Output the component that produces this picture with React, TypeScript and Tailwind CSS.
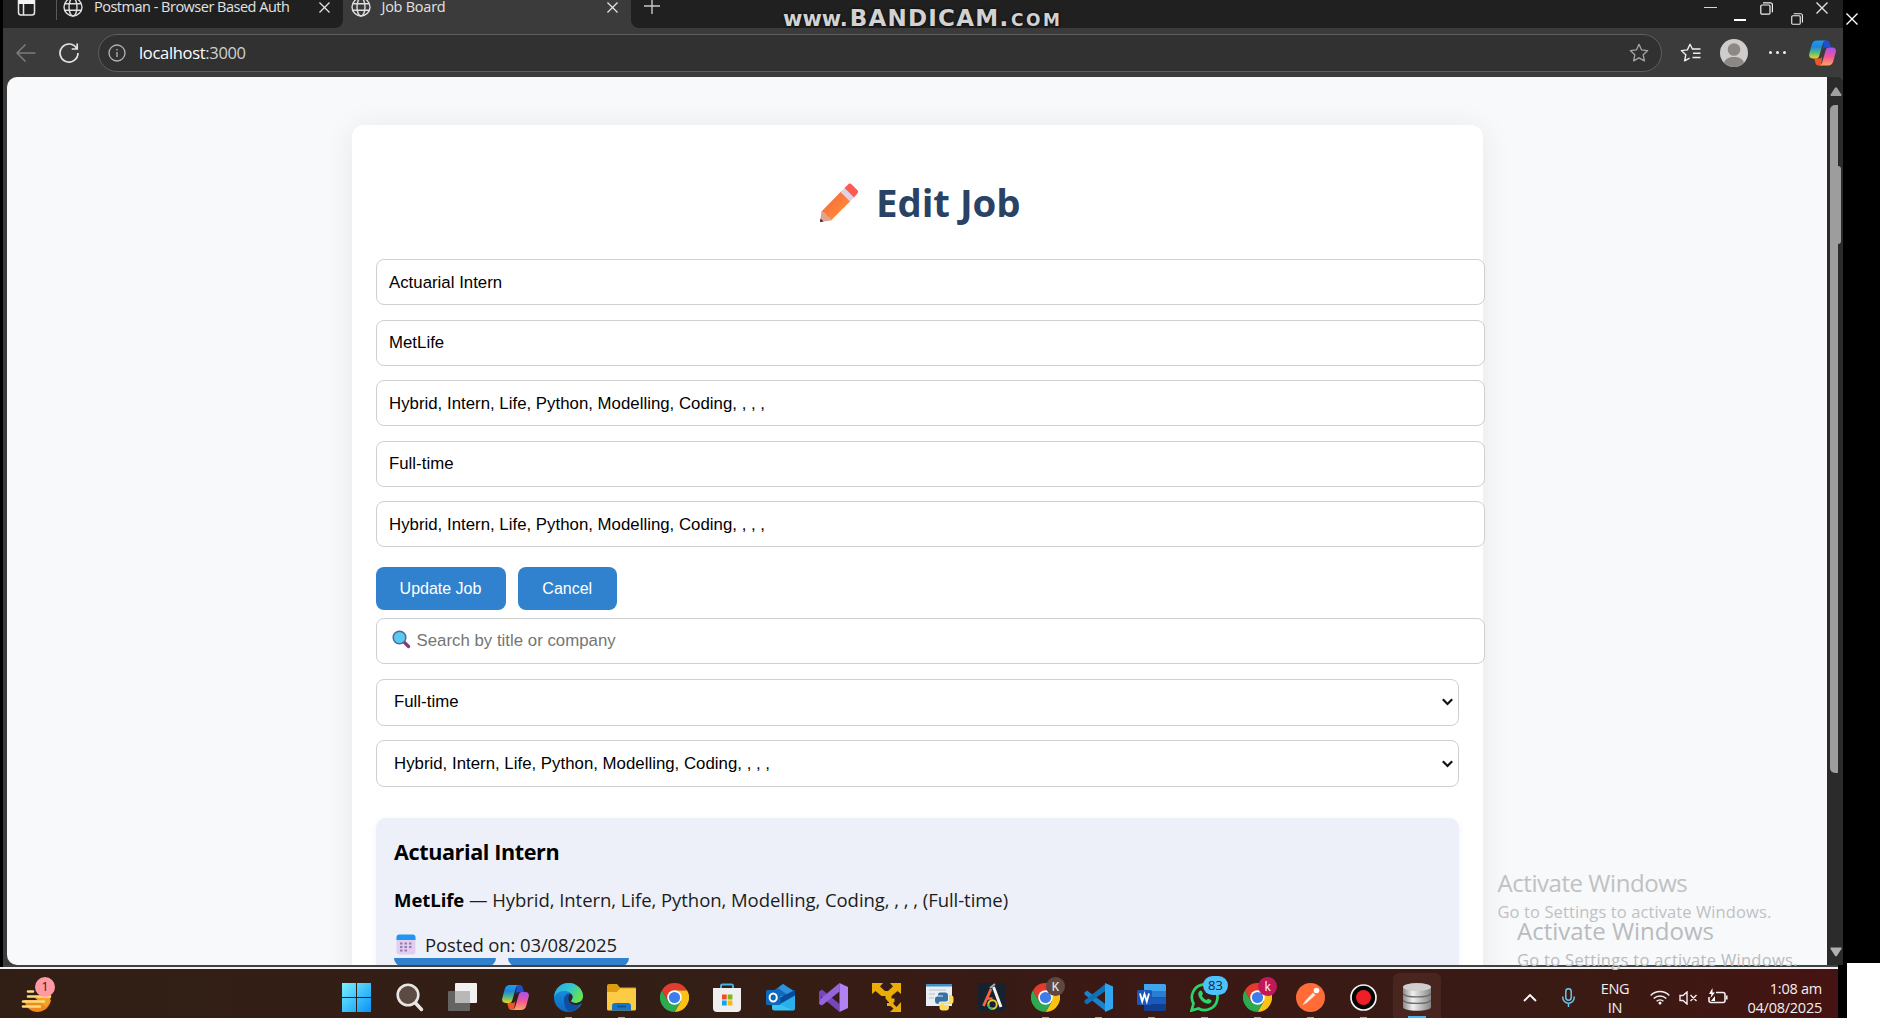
import type { ReactNode } from 'react';

const FIELDS = [
  'Actuarial Intern',
  'MetLife',
  'Hybrid, Intern, Life, Python, Modelling, Coding, , , ,',
  'Full-time',
  'Hybrid, Intern, Life, Python, Modelling, Coding, , , ,',
];
const FILTERS = ['Full-time', 'Hybrid, Intern, Life, Python, Modelling, Coding, , , ,'];

function Globe() {
  return (
    <svg width="20" height="20" viewBox="0 0 20 20" fill="none" stroke="#dedede" strokeWidth="1.4">
      <circle cx="10" cy="10" r="9" />
      <ellipse cx="10" cy="10" rx="4" ry="9" />
      <path d="M2 6.8h16M2 13.2h16" />
    </svg>
  );
}

function Cross({ size = 11, color = '#e2e2e2' }: { size?: number; color?: string }) {
  return (
    <svg width={size} height={size} viewBox="0 0 12 12" stroke={color} strokeWidth="1.4">
      <path d="M.5.5l11 11M11.5.5l-11 11" />
    </svg>
  );
}

function Restore({ size }: { size: number }) {
  return (
    <svg width={size} height={size} viewBox="0 0 13 13" fill="none" stroke="#f0f0f0" strokeWidth="1.2">
      <rect x=".8" y="3" width="9.2" height="9.2" rx="1.2" />
      <path d="M3 .8h7.4a2 2 0 0 1 2 2v7.4" />
    </svg>
  );
}

function Copilot({ id, w, h }: { id: string; w: number; h: number }) {
  return (
    <svg width={w} height={h} viewBox="0 0 27 25">
      <defs>
        <linearGradient id={id + 'a'} x1="0" y1="0" x2="0" y2="1">
          <stop offset="0" stopColor="#1b9cf0" />
          <stop offset=".35" stopColor="#1f86dc" />
          <stop offset=".65" stopColor="#52b788" />
          <stop offset="1" stopColor="#f2d21a" />
        </linearGradient>
        <linearGradient id={id + 'b'} x1="0" y1="0" x2="0" y2="1">
          <stop offset="0" stopColor="#a552ee" />
          <stop offset=".5" stopColor="#f0559b" />
          <stop offset="1" stopColor="#ffa45e" />
        </linearGradient>
      </defs>
      <path d="M15 0h2.600c1.800 0 2.700 1.200 3.200 2.800L22 7h-5c-2 0-2.800 1-3.300 2.600z" fill="#1c50d0" />
      <path d="M12 25H9.500c-1.900 0-2.700-1.200-3.100-2.800L5.200 18H10c2 0 2.800-1 3.300-2.600z" fill="#f0562e" />
      <path d="M8 0h9c-2 0-2.700 1.500-3.200 3.200l-3.600 12.300c-.5 1.700-1.400 2.500-3.200 2.500H3.500C.7 18-.3 15.800.2 13.500L2.800 4C3.600 1.200 5.300 0 8 0z" fill={`url(#${id}a)`} />
      <path d="M19 25h-9c2 0 2.700-1.500 3.200-3.200l3.600-12.300C17.300 7.800 18.200 7 20 7h3.500c2.800 0 3.800 2.200 3.300 4.500L24.200 21c-.8 2.800-2.500 4-5.200 4z" fill={`url(#${id}b)`} />
    </svg>
  );
}

function TitleBar() {
  return (
    <div className="flex h-7 w-[1840px] bg-[#3b3b3b]">
      <div className="flex w-[340px] rounded-br-lg bg-[#202020]">
        <div className="flex w-[53px] justify-end pr-[20px]">
          <svg width="19" height="16" viewBox="0 0 19 16" fill="none" stroke="#e6e6e6" strokeWidth="1.5">
            <path d="M1.500 0v12.500a2.500 2.500 0 0 0 2.500 2.500h11a2.500 2.500 0 0 0 2.500-2.500V0M6.500 4v11" />
            <path d="M1.500 0h16v4h-16z" fill="#f5f5f5" stroke="none" />
          </svg>
        </div>
        <div className="h-5 w-px bg-[#5a5a5a]" />
        <div className="-mt-[3px] ml-[6px]"><Globe /></div>
        <div className="ml-[11px] w-[200px] whitespace-nowrap text-[14.500px] leading-[13px] tracking-[-0.500px] text-[#e2e2e2]">Postman - Browser Based Auth</div>
        <div className="ml-[25px] mt-[2px]"><Cross /></div>
      </div>
      <div className="flex w-[288px] bg-[#3b3b3b]">
        <div className="-mt-[3px] ml-[8px]"><Globe /></div>
        <div className="ml-[10.500px] w-[218px] whitespace-nowrap text-[14.500px] leading-[13px] tracking-[-0.250px] text-[#e2e2e2]">Job Board</div>
        <div className="ml-[7px] mt-[2px]"><Cross /></div>
      </div>
      <div className="flex flex-1 rounded-bl-lg bg-[#202020]">
        <svg className="ml-[13px] -mt-[2px]" width="16" height="16" viewBox="0 0 16 16" stroke="#c8c8c8" strokeWidth="1.400"><path d="M8 0v16M0 8h16" /></svg>
        <div className="ml-auto flex pr-[15px]">
          <div className="mt-[6.500px] h-[1.500px] w-[13px] bg-[#d5d5d5]" />
          <div className="ml-[17px] mt-[19px] h-[1.500px] w-[12px] bg-white" />
          <div className="ml-[14px] mt-[2px]"><Restore size={13} /></div>
          <div className="ml-[18px] mt-[13px]"><Restore size={12} /></div>
          <div className="ml-[13px] mt-[2px]"><Cross size={12} /></div>
        </div>
      </div>
    </div>
  );
}

function Toolbar() {
  const star = 'M10 1.300l2.600 5.600 6.100.7-4.500 4.200 1.200 6.100L10 14.900l-5.400 3 1.200-6.100L1.300 7.600l6.100-.7z';
  return (
    <div className="flex h-[49px] w-[1840px] items-center bg-[#3b3b3b]">
      <svg className="ml-[13px]" width="20" height="18" viewBox="0 0 20 18" fill="none" stroke="#7c7c7c" strokeWidth="1.500"><path d="M19.500 9H1M9.500.5L1 9l8.500 8.500" /></svg>
      <svg className="ml-[23px]" width="20" height="20" viewBox="0 0 20 20" fill="none" stroke="#e4e4e4" strokeWidth="1.700"><path d="M17.800 5.500A9 9 0 1 0 19 10M18.200.5v5.500h-5.500" /></svg>
      <div className="ml-[19px] flex h-[38px] w-[1563.500px] items-center rounded-full border border-[#5e5e5e] bg-[#313131]">
        <svg className="ml-[9px]" width="18" height="18" viewBox="0 0 18 18" fill="none" stroke="#b4b4b4" strokeWidth="1.300"><circle cx="9" cy="9" r="8" /><path d="M9 8v5M9 5v1.400" /></svg>
        <span className="ml-[13px] text-[16.500px] leading-5 tracking-[-0.320px] text-white">localhost<span className="text-[#d0d0d0]">:3000</span></span>
        <svg className="ml-auto mr-[12px]" width="20" height="20" viewBox="0 0 20 20" fill="none" stroke="#a5a5a5" strokeWidth="1.300" strokeLinejoin="round"><path d={star} /></svg>
      </div>
      <svg className="ml-[18px]" width="21" height="20" viewBox="0 0 21 20" fill="none" stroke="#efefef" strokeWidth="1.400" strokeLinejoin="round"><path d="M12.800 6.800L10 1.300 7.400 6.900l-6.100.7 4.500 4.200-1.200 6.100 5-2.800M12.500 6h8M13 10.300h7.500M12.500 14.500h8" /></svg>
      <svg className="ml-[19px]" width="28" height="28" viewBox="0 0 28 28"><circle cx="14" cy="14" r="14" fill="#cfcdcb" /><circle cx="14" cy="10.500" r="6.300" fill="#8b8886" /><path d="M4 23.800c1-4 5-5.800 10-5.800s9 1.800 10 5.800A14 14 0 0 1 4 23.800z" fill="#8b8886" /></svg>
      <div className="ml-[21px] flex gap-[3.500px]">{[0, 1, 2].map((d) => <i key={d} className="size-[3.500px] rounded-full bg-[#efefef]" />)}</div>
      <div className="ml-[23px]"><Copilot id="top" w={27} h={26} /></div>
    </div>
  );
}

function Pencil() {
  return (
    <svg width="40" height="40" viewBox="0 0 40 40">
      <defs><linearGradient id="pen" x1="0" y1="0" x2="1" y2="1"><stop offset="0" stopColor="#e86a3a" /><stop offset=".55" stopColor="#ff7e3a" /><stop offset="1" stopColor="#ffa23c" /></linearGradient></defs>
      <path d="M2.500 28.500L22.500 8l9.500 9.500L12 37.500z" fill="url(#pen)" />
      <path d="M2.500 28.500L1 39l11-1.500c0-2.500-1.500-4-4-4.500-.5-2.500-2.500-4-5.500-4.500z" fill="#e0a590" />
      <path d="M1.500 35.500L1 39l3.500-.5z" fill="#3c1f35" />
      <path d="M21.500 9l4-4L35 14.500l-4 4z" fill="#dcd3ea" />
      <path d="M25.500 5l3.500-3.500c1.500-1.500 2.500-1.200 4 .2l5 5c1.400 1.400 1.500 2.700.2 4L35 14.500z" fill="#ff5a50" />
    </svg>
  );
}

function PageContent() {
  const box = 'shrink-0 flex items-center rounded-lg border border-[#cfcfcf] bg-white text-[16.800px] tracking-[0.020px]';
  return (
    <div className="flex h-[888px] w-[1820px] justify-center overflow-hidden rounded-l-[10px] bg-[#f7f9fb]">
      <div className="mt-12 flex h-[1100px] w-[1131px] flex-col rounded-xl bg-white px-6 shadow-[0_3px_32px_rgba(0,0,0,0.075)]">
        <h1 className="mt-[49px] mb-[27px] flex h-[58px] shrink-0 items-center justify-center gap-[16.500px] pl-[6px] text-[38.400px] font-bold text-[#2a4365]">
          <Pencil /><span className="tracking-[-0.050px]">Edit Job</span>
        </h1>
        <div className="flex flex-col gap-[14.500px] font-['Liberation_Sans',sans-serif] text-black">
          {FIELDS.map((f, i) => <div key={i} className={`${box} h-[46px] w-[1109px] pl-[12.500px] pt-px`}>{f}</div>)}
        </div>
        <div className="mt-[19.500px] flex h-[43.500px] shrink-0 gap-[12.500px] font-['Liberation_Sans',sans-serif] text-[16px] text-white">
          <button className="w-[130px] rounded-lg bg-[#3182ce] pt-px">Update Job</button>
          <button className="w-[98.500px] rounded-lg bg-[#3182ce] pt-px">Cancel</button>
        </div>
        <div className="mt-2 flex flex-col gap-[14.500px] font-['Liberation_Sans',sans-serif] text-black">
          <div className={`${box} h-[46px] w-[1109px] pb-[1px] pl-[15px] text-[#757575]`}>
            <svg className="-mt-[2px] mr-[6px]" width="19" height="19" viewBox="0 0 19 19"><path d="M11 11l5.500 5.500" stroke="#7b3f7c" strokeWidth="3.200" strokeLinecap="round" /><circle cx="7.500" cy="7.500" r="6.300" fill="#5cc9ee" stroke="#476a9c" strokeWidth="1.500" /></svg>
            Search by title or company
          </div>
          {FILTERS.map((f, i) => (
            <div key={i} className={`${box} h-[47px] w-[1083px] justify-between pl-[17.500px] pr-[5px]`}>
              {f}
              <svg width="11" height="8" viewBox="0 0 11 8" fill="none" stroke="#111" strokeWidth="2.200"><path d="M.8 1.200L5.500 6l4.700-4.800" /></svg>
            </div>
          ))}
        </div>
        <div className="mt-[30.500px] flex h-[240px] shrink-0 flex-col rounded-[10px] bg-[#edf0f8] pl-[18.500px] text-black shadow-[0_2px_8px_rgba(0,0,0,0.05)]">
          <h3 className="mt-[19px] text-[21.600px] font-bold leading-[30px] tracking-[-0.400px]">Actuarial Intern</h3>
          <p className="mt-[18px] whitespace-nowrap text-[18.500px] leading-[30px] tracking-[-0.050px] text-[#1c1c1c]"><b className="text-black">MetLife</b> — Hybrid, Intern, Life, Python, Modelling, Coding, , , , (Full-time)</p>
          <p className="mt-[15px] flex items-center text-[18.500px] leading-[29px] tracking-[-0.120px] text-[#1c1c1c]">
            <svg className="ml-[2px] mr-[9px]" width="20" height="21" viewBox="0 0 20 21"><rect x=".5" y="1" width="19" height="19.500" rx="3" fill="#e2cdf0" /><path d="M.5 6V3.500A3 3 0 0 1 3.500.5h13a3 3 0 0 1 3 3V6z" fill="#2295f2" /><path d="M4 9.500h12M4 13h12M4 16.500h8" stroke="#8f7fb0" strokeWidth="2" strokeDasharray="2.500 2" /></svg>
            Posted on: 03/08/2025
          </p>
          <div className="flex gap-[11.500px]">
            <div className="mt-[-1px] h-[8px] w-[102px] rounded-b-lg bg-[#3182ce]" />
            <div className="mt-[-1px] h-[8px] w-[121px] rounded-b-lg bg-[#3182ce]" />
          </div>
        </div>
      </div>
    </div>
  );
}

function ScrollBar() {
  return (
    <div className="flex h-[888px] w-4 flex-col rounded-tr-md bg-[#2b2b2b] pl-[3px]">
      <svg className="mt-[10px]" width="12" height="9" viewBox="0 0 12 9"><path d="M5 .8a1.300 1.300 0 0 1 2 0l4.700 7.200-.6 1H.9l-.6-1z" fill="#a0a0a0" /></svg>
      <div className="mt-[9px] flex h-[668px]">
        <div className="w-[8px] rounded-l-[5px] bg-[#9d9d9d]" />
        <div className="mt-[61px] h-[78px] w-[3px] rounded-r-[3px] bg-[#9d9d9d]" />
      </div>
      <svg className="mt-auto mb-[8px]" width="12" height="10" viewBox="0 0 12 9"><path d="M5 8.200a1.300 1.300 0 0 0 2 0L11.700 1l-.6-1H.9L.3 1z" fill="#b0b0b0" /></svg>
    </div>
  );
}

function Chrome() {
  return (
    <svg width="29" height="29" viewBox="0 0 48 48">
      <path d="M24 12h20.800A24 24 0 0 1 24 48l10.400-18z" fill="#fbc116" />
      <path d="M13.600 30L3.200 12A24 24 0 0 0 24 48l10.400-18z" fill="#2da94f" />
      <path d="M3.200 12A24 24 0 0 1 44.800 12H24L13.600 30z" fill="#e33b2e" />
      <circle cx="24" cy="24" r="12" fill="#fff" /><circle cx="24" cy="24" r="9.300" fill="#3b7ded" />
    </svg>
  );
}

function Badge({ children, className }: { children: ReactNode; className: string }) {
  return <span className={`absolute flex items-center justify-center rounded-full font-semibold ${className}`}>{children}</span>;
}

const APPS: { key: string; icon: ReactNode; run?: boolean; badge?: ReactNode; active?: boolean }[] = [
  { key: 'start', icon: <svg width="29" height="29" viewBox="0 0 29 29"><defs><linearGradient id="win" x1="0" y1="0" x2="1" y2="1"><stop offset="0" stopColor="#7df0fc" /><stop offset=".5" stopColor="#3fc2fb" /><stop offset="1" stopColor="#0794f6" /></linearGradient></defs><path d="M0 0h14v14H0zM15 0h14v14H15zM0 15h14v14H0zM15 15h14v14H15z" fill="url(#win)" /></svg> },
  { key: 'search', icon: <svg className="ml-[2px]" width="28" height="29" viewBox="0 0 28 29"><circle cx="12" cy="12" r="10.300" fill="#5c4b42" stroke="#e8e6e5" strokeWidth="2.600" /><path d="M19.500 20l6 6.500" stroke="#e8e6e5" strokeWidth="3.500" strokeLinecap="round" /></svg> },
  { key: 'tasks', icon: <svg width="29" height="28" viewBox="0 0 29 28"><rect y="8" width="22" height="20" rx="1" fill="#666463" /><rect x="7" width="22" height="20" rx="1" fill="#f1f1f1" /><path d="M7 8h15v12H7z" fill="#b9b8b8" /></svg> },
  { key: 'copilot', icon: <Copilot id="bar" w={27} h={25} /> },
  { key: 'edge', run: true, icon: <svg width="29" height="29" viewBox="0 0 29 29"><defs><linearGradient id="ed" x1="0" y1="0" x2="1" y2=".5"><stop offset="0" stopColor="#22a7e8" /><stop offset=".5" stopColor="#2fc3d6" /><stop offset="1" stopColor="#66e34f" /></linearGradient><linearGradient id="ed2" x1="0" y1="0" x2="0" y2="1"><stop offset="0" stopColor="#199be6" /><stop offset="1" stopColor="#0d66c0" /></linearGradient></defs><circle cx="14.500" cy="14.500" r="14.500" fill="url(#ed2)" /><path d="M1 10C3 4 8 0 14.500 0 23 0 29 6.500 29 13c0 4.500-3.500 7-7.500 7-3 0-4.500-1-4.500-2 0-.8 1.500-1.600 1.500-4C18.500 10.500 15 8 10.500 8 6 8 2.500 9.500 0 14z" fill="url(#ed)" /><path d="M10 17c0-4 2.500-6.500 5.500-6.500 2 0 3 2 3 3.500 0 2.400-1.500 3.200-1.500 4 0 1 1.500 2 4.500 2 2 0 3.700-.6 5-1.600C25 24.500 20.500 28.500 16 28.500 12 28 10 22 10 17z" fill="#0f4f9e" /><path d="M15.500 11c2 0 3 1.500 3 3s-1.500 3.200-1.500 4 1 2 4.500 2 7-2 7.500-5v4.500c-1.500 1.500-4 2.500-6.500 2.500-5 0-8-3-8-6 0-2 .5-3.500 1-5z" fill="#35201a" /></svg> },
  { key: 'files', run: true, icon: <svg width="29" height="27" viewBox="0 0 29 27"><path d="M0 2a2 2 0 0 1 2-2h8l3 3.500H29V10H0z" fill="#dd9c14" /><path d="M0 8h10l3-3.500h14.500A1.500 1.500 0 0 1 29 6v19a1.500 1.500 0 0 1-1.500 1.500h-26A1.500 1.500 0 0 1 0 25z" fill="#fdcb45" /><path d="M5 26.500V22a3 3 0 0 1 3-3h13a3 3 0 0 1 3 3v4.500z" fill="#1277c8" /><path d="M10 22.500h9" stroke="#0b4e8c" strokeWidth="1.500" /></svg> },
  { key: 'chrome', icon: <Chrome /> },
  { key: 'store', icon: <svg width="28" height="29" viewBox="0 0 28 29"><path d="M8 7V3a1.500 1.500 0 0 1 1.500-1.500h9A1.500 1.500 0 0 1 20 3v4" fill="none" stroke="#45b4e0" strokeWidth="2" /><path d="M0 5h28v20a4 4 0 0 1-4 4H4a4 4 0 0 1-4-4z" fill="#efefef" /><path d="M9 11.500h4.700v5H9z" fill="#f04e27" /><path d="M14.700 11.500h4.700v5h-4.700z" fill="#7cb913" /><path d="M9 17.500h4.700v5H9z" fill="#14a2e8" /><path d="M14.700 17.500h4.700v5h-4.700z" fill="#fbb70f" /></svg> },
  { key: 'outlook', icon: <svg width="29" height="27" viewBox="0 0 29 27"><path d="M7 7l10-7 11 7v7H7z" fill="#1769bd" /><path d="M12 4l5-4 12 8v4l-3 2z" fill="#2f92dc" /><path d="M6 12h23v12a2.500 2.500 0 0 1-2.500 2.500H8.500A2.500 2.500 0 0 1 6 24z" fill="#39c3f3" /><path d="M29 11v13a2.500 2.500 0 0 1-2 2.400L13 20z" fill="#27b0ec" /><path d="M12 14.500L29 6v5.500L14 20z" fill="#0a4a98" /><rect y="6" width="14.500" height="15" rx="1.500" fill="#0c69bd" /><ellipse cx="7.200" cy="13.500" rx="3.600" ry="4" fill="none" stroke="#fff" strokeWidth="2" /></svg> },
  { key: 'vs', icon: <svg width="29" height="29" viewBox="0 0 29 29"><path d="M0 8.500L3 6.500 20.500 21v8L2 13.500v9L0 20.500z" fill="#7347bd" /><path d="M0 20.500l3 2L20.500 8.500V0L2 15.500z" fill="#9564dc" /><path d="M20.500 0L29 4v21l-8.500 4z" fill="#b183f1" /></svg> },
  { key: 'links', icon: <svg width="29" height="29" viewBox="0 0 29 29" fill="#e9ad06"><path d="M0 0h11L8 3.500l5 4.500h3l5-4.500L18 0h11v11l-3.500-3-6 5v2.500h3V19h-6l-3-3.500V13h-4l-6-5L0 11z" /><path d="M17 17.500h4.500V21l3 3 4.500-5v10H18l3.500-3.500-3-2.500H15v-3h2z" /></svg> },
  { key: 'python', icon: <svg className="ml-[2px]" width="28" height="27" viewBox="0 0 28 27"><path d="M0 0h26v22H0z" fill="#e9eef2" /><path d="M0 0h26v2.500H0z" fill="#3f8fc4" /><path d="M3 6h17M3 10h6M3 14h5" stroke="#b8c2c9" /><path d="M14 8.500h5a3 3 0 0 1 3 3V15a2.500 2.500 0 0 1-2.500 2.500H15a2.500 2.500 0 0 0-2.500 2.500h-1a3 3 0 0 1-2.500-3v-2a2.500 2.500 0 0 1 2.500-2.500H17v-1h-5c0-2 .5-3 2-3z" fill="#3572a8" /><path d="M23 11h1a3 3 0 0 1 3.500 3v3a3 3 0 0 1-3 3H18v1h5v2.500a3 3 0 0 1-3 3h-3.500a3 3 0 0 1-3-3V21a2.500 2.500 0 0 1 2.500-2.500h4.500A2.500 2.500 0 0 0 23 16z" fill="#fbdc5b" /></svg> },
  { key: 'android', icon: <svg width="28" height="28" viewBox="0 0 28 28"><path d="M0 0h28v28H0z" fill="#18222e" /><path d="M5.500 23L13 6" stroke="#f06543" strokeWidth="2.800" /><path d="M8.500 15.500h6" stroke="#f06543" strokeWidth="2.400" /><path d="M15.500 4l7.500 20" stroke="#f3f3f3" strokeWidth="3" /><path d="M12 5l5-4" stroke="#aaa" strokeWidth="2" /><circle cx="14.500" cy="21.500" r="4.200" fill="none" stroke="#e3cc2c" strokeWidth="2" /><path d="M10.300 21.500a4.200 4.200 0 0 0 4.200 4.200" fill="none" stroke="#38b56b" strokeWidth="2" /></svg> },
  { key: 'chromeK', run: true, icon: <Chrome />, badge: <Badge className="-top-[5px] left-[15px] size-[19px] bg-[#604840] text-[12px] text-[#ddd]">K</Badge> },
  { key: 'code', run: true, icon: <svg width="29" height="29" viewBox="0 0 29 29"><path d="M.5 9.500l2.500-2L22 21.500v7L.5 11.500z" fill="#1a82cc" /><path d="M.5 19.500l2.500 2L22 7.500v-7L.5 17.500z" fill="#1071b8" /><path d="M21 0l8 3.500v22L21 29z" fill="#2fa6f2" /></svg> },
  { key: 'word', run: true, icon: <svg width="29" height="27" viewBox="0 0 29 27"><path d="M7 0h20.500A1.500 1.500 0 0 1 29 1.500V7H7z" fill="#41a5ee" /><path d="M7 7h22v6.500H7z" fill="#2b7cd3" /><path d="M7 13.500h22V20H7z" fill="#185abd" /><path d="M7 20h22v5.500a1.500 1.500 0 0 1-1.500 1.500h-19A1.500 1.500 0 0 1 7 25.500z" fill="#103f91" /><rect y="6" width="15" height="15" rx="1.500" fill="#1b58b8" /><path d="M3 9.500l2.200 8 2.300-7.500 2.300 7.500 2.200-8" fill="none" stroke="#fff" strokeWidth="1.800" /></svg> },
  { key: 'whatsapp', run: true, icon: <svg width="29" height="29" viewBox="0 0 29 29"><path d="M1.500 27.500l2-7A12.800 12.800 0 1 1 8.500 25.500z" fill="none" stroke="#2bd46a" strokeWidth="2.700" /><path d="M9.500 8c1-1 2-.6 2.400.2l1 2.400c.2.8-1 1.600-1 2 .8 2 2.500 3.600 4.600 4.400.6 0 1.200-1.500 2-1.200l2.500 1.300c.8.500.5 1.700-.4 2.600-2 2-5.500.9-8-1.200-3.200-2.700-6-7.700-3.100-10.500z" fill="#2bd46a" /></svg>, badge: <Badge className="-top-[6px] left-[13px] h-[19px] w-[25px] bg-[#4cc2ff] text-[13px] font-normal! text-[#12263a]">83</Badge> },
  { key: 'chromek', run: true, icon: <Chrome />, badge: <Badge className="-top-[5px] left-[15px] size-[19px] bg-[#c2185b] text-[12px] font-normal! text-white">k</Badge> },
  { key: 'postman', run: true, icon: <svg width="29" height="29" viewBox="0 0 29 29"><circle cx="14.500" cy="14.500" r="14.500" fill="#ff6c37" /><circle cx="20.500" cy="7.500" r="2.800" fill="#fff" /><path d="M17 9.500l2.500 2.500-9 8-4 2 3-4.500z" fill="#ffe9e0" /></svg> },
  { key: 'rec', run: true, icon: <svg width="27" height="27" viewBox="0 0 27 27"><circle cx="13.500" cy="13.500" r="12.500" fill="#050505" stroke="#f5f5f5" strokeWidth="1.700" /><circle cx="13.500" cy="13.500" r="7.500" fill="#ee1f26" /></svg> },
  { key: 'db', active: true, icon: <svg width="28" height="28" viewBox="0 0 28 28"><defs><linearGradient id="db" x1="0" x2="1"><stop offset="0" stopColor="#8c8c8c" /><stop offset=".35" stopColor="#efefef" /><stop offset="1" stopColor="#858585" /></linearGradient></defs><path d="M0 4v20c0 5 28 5 28 0V4z" fill="url(#db)" /><ellipse cx="14" cy="4" rx="14" ry="4" fill="#cfcfcf" /><path d="M0 10.500c2 4.500 26 4.500 28 0M0 17c2 4.500 26 4.500 28 0" fill="none" stroke="#6d6968" strokeWidth="1.400" /></svg> },
];

function TaskBar() {
  return (
    <div className="flex h-[49px] w-[1838px] bg-[linear-gradient(90deg,#311f15_0%,#341e15_40%,#3b1914_62%,#391b14_85%,#451312_100%)]">
      <div className="relative w-[329.500px]">
        <svg className="ml-[21px] mt-[13px]" width="34" height="31" viewBox="0 0 34 31"><path d="M3 18h27c-1 7-7 12-13.500 12S5 26 3 18z" fill="#f08a1c" /><path d="M14 16l15-6c2 6-.5 12-4 15z" fill="#f4a22a" /><path d="M7 9.500h5M7 14.500h22M2 19.500h21M2 24.500h17" stroke="#ffdb7a" strokeWidth="2.600" strokeLinecap="round" /></svg>
        <Badge className="left-[35px] top-[8px] size-[20px] bg-[#ff99a4] text-[13px] font-normal! text-[#40201c]">1</Badge>
      </div>
      <div className="flex">
        {APPS.map((a) => (
          <div key={a.key} className="flex w-[53.040px] justify-center">
            <div className={`flex h-[45px] w-[48px] flex-col items-center self-end ${a.active ? 'rounded-t-md bg-[#48261f]' : ''}`}>
              <div className="relative mt-[9px] flex h-[30px] items-center">{a.icon}{a.badge}</div>
              {a.run && <div className="mt-auto h-[1px] w-[7px] bg-[#a59a95]" />}
              {a.active && <div className="mt-auto h-[2px] w-[18px] bg-[#4cb5ee]" />}
            </div>
          </div>
        ))}
      </div>
      <div className="flex flex-1 items-center justify-end text-[14.500px] leading-[19px] text-[#f3efee]">
        <svg className="mt-[9px]" width="14" height="8" viewBox="0 0 14 8" fill="none" stroke="#fff" strokeWidth="1.800"><path d="M1 7l6-6 6 6" /></svg>
        <svg className="ml-[25px] mt-[8px]" width="13" height="19" viewBox="0 0 13 19" fill="none" stroke="#6fc3e8" strokeWidth="1.500"><rect x="3.800" y=".8" width="5.400" height="11.500" rx="2.700" /><path d="M.8 8.500v1a5.700 5.700 0 0 0 11.400 0v-1M6.500 15v4" /></svg>
        <div className="ml-[25px] mt-[9px] w-[30px] text-center tracking-[-0.300px]">ENG<br />IN</div>
        <svg className="ml-[20px] mt-[8px]" width="20" height="15" viewBox="0 0 20 15" fill="none" stroke="#f3efee" strokeWidth="1.500"><path d="M.7 5.500a13 13 0 0 1 18.600 0M3.700 8.500a9 9 0 0 1 12.600 0M6.600 11.300a5 5 0 0 1 6.800 0" /><circle cx="10" cy="13" r="1.500" fill="#fff" stroke="none" /></svg>
        <svg className="ml-[9px] mt-[8px]" width="19" height="14" viewBox="0 0 19 14" fill="none" stroke="#f3efee" strokeWidth="1.400"><path d="M1 4.500h3L8 1v12L4 9.500H1zM11.500 4l6 6M17.500 4l-6 6" /></svg>
        <svg className="ml-[10px] mt-[6px]" width="20" height="17" viewBox="0 0 20 17" fill="none" stroke="#f3efee" strokeWidth="1.600"><path d="M8 4.500h7a2 2 0 0 1 2 2v6a2 2 0 0 1-2 2H3a2 2 0 0 1-2-2V9M18.800 7.500v4" /><path d="M4.500 0L1 6h2.500L2.500 10 7 4.500H4.500z" fill="#fff" stroke="none" /><path d="M3 13l4-5v5z" fill="#fff" stroke="none" /></svg>
        <div className="ml-[14px] mr-[16px] mt-[8px] w-[80px] text-right tracking-[-0.250px]">1:08 am<br />04/08/2025</div>
      </div>
    </div>
  );
}

export default function App() {
  return (
    <div className="relative h-[1018px] w-[1880px] overflow-hidden bg-black font-['Open_Sans','Noto_Sans',sans-serif]">
      <div className="flex h-[969px] w-[1843px] flex-col pl-[3px]">
        <TitleBar />
        <Toolbar />
        <div className="flex w-[1840px] bg-[#3b3b3b] pl-1">
          <PageContent />
          <ScrollBar />
        </div>
        <div className="h-[2px] w-[1835px] bg-[#41423f]" />
        <div className="-ml-[3px] h-[2px] w-[1838px] bg-[#f4f2f4]" />
      </div>
      <TaskBar />

      <div className="absolute left-[783px] top-[4px] flex items-baseline whitespace-nowrap font-['DejaVu_Sans',sans-serif] font-bold leading-[28px] text-[#d2d2d2] [text-shadow:0_0_3px_#000]">
        <span className="text-[21px]">www.</span>
        <span className="ml-[2px] text-[23px] tracking-[1.200px]">BANDICAM</span>
        <span className="text-[24px] tracking-[2.600px] [font-variant:small-caps]">.com</span>
      </div>
      <div className="absolute left-[1846px] top-[13px]"><Cross size={12} color="#fff" /></div>
      <div className="absolute left-[1497.500px] top-[864px] whitespace-nowrap text-[#bfc1c3]">
        <div className="text-[24px] leading-[38px] tracking-[-0.450px]">Activate Windows</div>
        <div className="text-[16.500px] leading-[20px] tracking-[0.100px]">Go to Settings to activate Windows.</div>
      </div>
      <div className="absolute left-[1517px] top-[912px] whitespace-nowrap text-[#b9bbbd]">
        <div className="text-[24px] leading-[38px]">Activate Windows</div>
        <div className="text-[16.500px] leading-[20px] tracking-[0.300px]">Go to Settings to activate Windows.</div>
      </div>
      <div className="absolute bottom-0 right-0 h-[55px] w-[33px] bg-white" />
    </div>
  );
}
